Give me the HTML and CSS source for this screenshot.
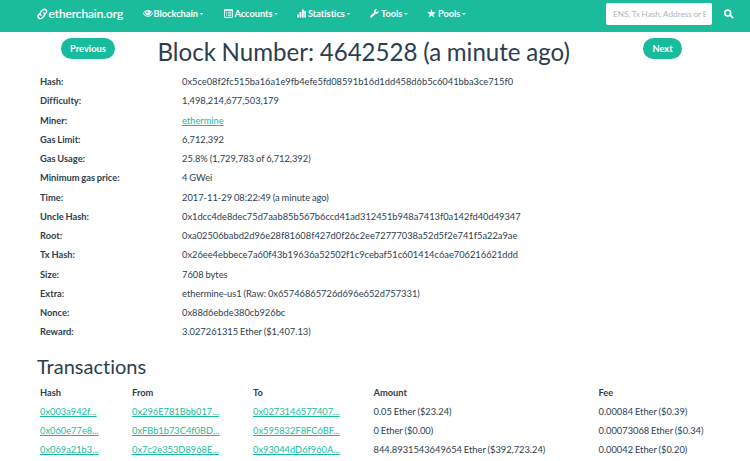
FILE: index.html
```html
<!DOCTYPE html>
<html lang="en">
<head>
<meta charset="utf-8">
<title>Block 4642528 - etherchain.org</title>
<link rel="stylesheet" href="styles.css">
</head>
<body>
<nav class="navbar">
  <a class="brand" href="#"><svg class="brand-icon" viewBox="0 0 24 24"><g fill="none" stroke="currentColor" stroke-width="3" stroke-linecap="round"><path d="M9 15C6.500 12.500 7 9 9 6.500L12.500 3.300C17 -.5 23 4 20.200 9L18 12"/><path d="M14.500 9.500C17.200 12 16.600 15 14.500 17.500L11 20.700C6 24.500 0 19.500 3 14.800L5.500 12"/></g></svg>etherchain.org</a>
  <ul class="menu">
    <li class="item blockchain"><svg class="icon eye" viewBox="0 0 20 14"><path fill="currentColor" fill-rule="evenodd" d="M10 0C5 0 1.800 3.500 0 7c2 4 5.500 6.500 10 6.500S18 11 20 7C18.200 3.500 15 0 10 0ZM5 3.200C4 6 4.200 8 6 9.700c2.200 2 5.800 2 8 0C15.800 8 16 6 15 3.200 17 4.300 18 5.800 18.500 7 16.500 10.300 14 12 10 12S3.500 10.300 1.500 7C2 5.800 3 4.300 5 3.200ZM8.500 2.500a2 2 0 1 0 .1 4 2 2 0 0 0-.1-4Z"/></svg>Blockchain<i class="caret"></i></li>
    <li class="item accounts"><svg class="icon list" viewBox="0 0 18 18"><path fill="none" stroke="currentColor" stroke-width="1.700" d="M1 1h16v16H1zM1 3h16M4 6.500h2M8 6.500h7M4 10h2M8 10h7M4 13.500h2M8 13.500h7"/></svg>Accounts<i class="caret"></i></li>
    <li class="item statistics"><svg class="icon bars" viewBox="0 0 18 18"><path fill="currentColor" d="M0 11h4v6H0zM5 6h4v11H5zM10 1h3.500v16H10zM14.500 4H18v13h-3.500z"/></svg>Statistics<i class="caret"></i></li>
    <li class="item tools"><svg class="icon wrench" viewBox="0 0 20 20"><path fill="currentColor" d="M19.500 4.500l-4 2.300-2.800-1.500-.1-2.200L16.200.7C13-.7 9.500 1.300 9 4.500c-.1 1 0 2 .2 2.800L.8 15.600c-1.500 1.600 1.500 4.900 3.300 3.300l8.500-8.300c3.700 1 7.300-2 6.900-6.100Z"/></svg>Tools<i class="caret"></i></li>
    <li class="item pools"><svg class="icon star" viewBox="0 0 20 20"><path fill="currentColor" d="m10 0 2.500 7H20l-6 4.600 2.200 7.400-6.200-4.400L3.800 19 6 11.600 0 7h7.500z"/></svg>Pools<i class="caret"></i></li>
  </ul>
  <form class="search">
    <input class="search-input" type="text" placeholder="ENS, Tx Hash, Address or Block" aria-label="Search">
    <svg class="search-icon" viewBox="0 0 18 18"><path fill="none" stroke="currentColor" stroke-width="3" d="M12 7.300a5.300 5.300 0 1 1-10.600 0 5.300 5.300 0 0 1 10.600 0ZM11 11l5.500 5.500"/></svg>
  </form>
</nav>
<main class="container">
  <header class="pager">
    <a class="button previous" href="#">Previous</a>
    <h1 class="title">Block Number: 4642528 (a minute ago)</h1>
    <a class="button next" href="#">Next</a>
  </header>
  <dl class="details">
    <dt>Hash:</dt><dd>0x5ce08f2fc515ba16a1e9fb4efe5fd08591b16d1dd458d6b5c6041bba3ce715f0</dd>
    <dt>Difficulty:</dt><dd>1,498,214,677,503,179</dd>
    <dt>Miner:</dt><dd><a href="#">ethermine</a></dd>
    <dt>Gas Limit:</dt><dd>6,712,392</dd>
    <dt>Gas Usage:</dt><dd>25.8% (1,729,783 of 6,712,392)</dd>
    <dt>Minimum gas price:</dt><dd>4 GWei</dd>
    <dt>Time:</dt><dd>2017-11-29 08:22:49 (a minute ago)</dd>
    <dt>Uncle Hash:</dt><dd>0x1dcc4de8dec75d7aab85b567b6ccd41ad312451b948a7413f0a142fd40d49347</dd>
    <dt>Root:</dt><dd>0xa02506babd2d96e28f81608f427d0f26c2ee72777038a52d5f2e741f5a22a9ae</dd>
    <dt>Tx Hash:</dt><dd>0x26ee4ebbece7a60f43b19636a52502f1c9cebaf51c601414c6ae706216621ddd</dd>
    <dt>Size:</dt><dd>7608 bytes</dd>
    <dt>Extra:</dt><dd>ethermine-us1 (Raw: 0x65746865726d696e652d757331)</dd>
    <dt>Nonce:</dt><dd>0x88d6ebde380cb926bc</dd>
    <dt>Reward:</dt><dd>3.027261315 Ether ($1,407.13)</dd>
  </dl>
  <h2 class="subtitle">Transactions</h2>
  <table class="transactions">
    <colgroup><col class="col-hash"><col class="col-from"><col class="col-to"><col class="col-amount"><col class="col-fee"></colgroup>
    <thead><tr><th>Hash</th><th>From</th><th>To</th><th>Amount</th><th>Fee</th></tr></thead>
    <tbody>
      <tr><td><a href="#">0x003a942f...</a></td><td><a href="#">0x296E781Bbb017...</a></td><td><a href="#">0x0273146577407...</a></td><td>0.05 Ether ($23.24)</td><td>0.00084 Ether ($0.39)</td></tr>
      <tr><td><a href="#">0x060e77e8...</a></td><td><a href="#">0xFBb1b73C4f0BD...</a></td><td><a href="#">0x595832F8FC6BF...</a></td><td>0 Ether ($0.00)</td><td>0.00073068 Ether ($0.34)</td></tr>
      <tr><td><a href="#">0x069a21b3...</a></td><td><a href="#">0x7c2e353D8968E...</a></td><td><a href="#">0x93044dD6f960A...</a></td><td>844.8931543649654 Ether ($392,723.24)</td><td>0.00042 Ether ($0.20)</td></tr>
    </tbody>
  </table>
</main>
</body>
</html>
```
FILE: styles.css
```css
* { box-sizing: border-box; }
body {
  margin: 0;
  height: 461px;
  overflow: hidden;
  background: #fff;
  color: #2c3e50;
  font: 9.31px/13.25px Lato, sans-serif;
  font-variant-ligatures: none;
  word-spacing: -.5px;
}
a { color: #18bc9c; }
.navbar {
  display: flex;
  align-items: center;
  height: 31.5px;
  padding: 0 16px 4px 37px;
  background: #1abc9c;
  color: #fff;
}
.brand {
  display: flex;
  align-items: center;
  width: 105.5px;
  color: #fff;
  font-size: 11.8px;
  -webkit-text-stroke: .2px currentColor;
  text-decoration: none;
}
.brand-icon { width: 11px; height: 12px; margin-right: .5px; }
.menu { display: flex; flex: 1; margin: 0; padding: 0; list-style: none; font-size: 9.2px; }
.item { display: flex; align-items: center; font-weight: 700; white-space: nowrap; }
.blockchain { width: 81px; }
.accounts { width: 73.5px; }
.statistics { width: 73px; }
.tools { width: 57px; }
.icon { width: 9px; height: 9px; margin-right: 2px; }
.eye { width: 10px; height: 7px; margin-right: 1px; }
.caret {
  margin-left: 1px;
  border: 2.5px solid transparent;
  border-width: 2.9px 2.9px 0;
  border-top-color: currentColor;
  width: 5px;
  height: 2.5px;
  border: 0;
  background: currentColor;
  clip-path: polygon(0 0, 100% 0, 50% 100%);
}
.search { display: flex; align-items: center; }
.search-input {
  width: 106px;
  height: 22px;
  padding: 0 6.5px 0 7px;
  border: 0;
  border-radius: 2px;
  background: #fff;
  font: 8.15px Lato, sans-serif;
  word-spacing: -.3px;
}
.search-input::placeholder { color: #acb6c0; }
.search-icon { width: 10px; height: 10px; margin-left: 12px; }
.container { padding: 0 37px; }
.pager { display: flex; align-items: flex-start; height: 40.7px; padding: 6.5px 31px 0 24px; }
.button {
  height: 21px;
  border-radius: 11px;
  background: #18bc9c;
  color: #fff;
  font-weight: 700;
  line-height: 21px;
  text-align: center;
  text-decoration: none;
}
.previous { width: 54px; }
.next { width: 39px; }
.title {
  flex: 1;
  margin: 0;
  padding-left: 42.5px;
  font-size: 24.1px;
  font-weight: 400;
  line-height: 28px;
  white-space: nowrap;
}
.details {
  display: grid;
  grid-template-columns: 142px 1fr;
  grid-auto-rows: 19.25px;
  align-items: center;
  margin: 0;
  padding-left: 3px;
}
.details dt { font-weight: 700; }
.details dd { margin: 0; }
.subtitle { margin: 12px 0 5px; font-size: 20px; font-weight: 400; line-height: 24px; }
.transactions { width: 676px; table-layout: fixed; border-collapse: collapse; text-align: left; }
.transactions th, .transactions td { height: 19.25px; padding: 0 0 0 3px; white-space: nowrap; }
.col-hash { width: 92px; }
.col-from { width: 121px; }
.col-to { width: 120.5px; }
.col-amount { width: 225px; }
```
